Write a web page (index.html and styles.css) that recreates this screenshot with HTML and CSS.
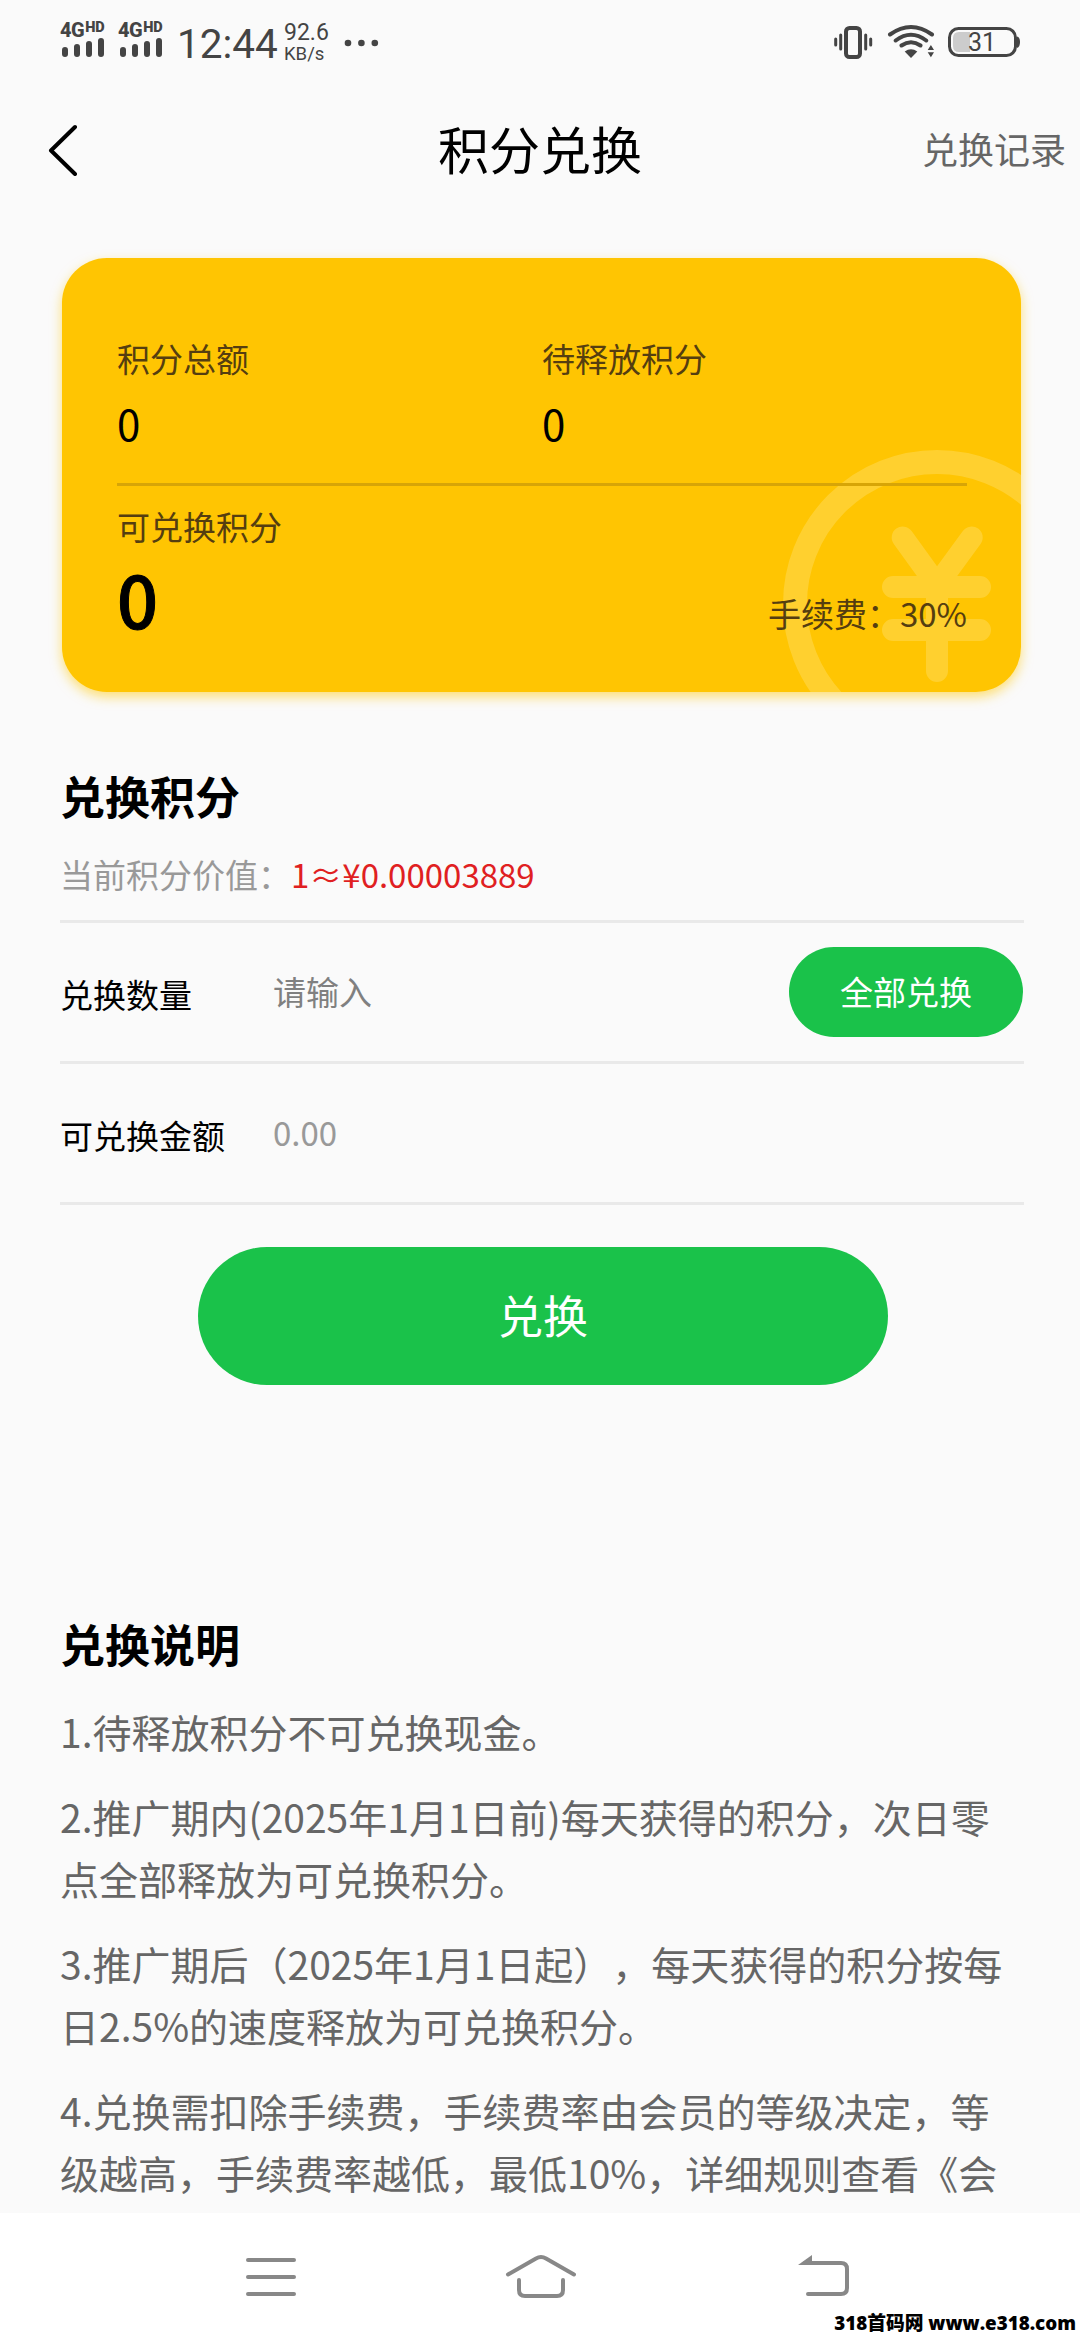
FILE: index.html
```html
<!DOCTYPE html>
<html lang="zh-CN">
<head>
<meta charset="utf-8">
<title>积分兑换</title>
<link rel="stylesheet" href="styles.css">
</head>
<body>
<div class="screen">
  <header class="status">
    <div class="status-left">
      <div class="signal">
        <div class="net">4G<span class="hd">HD</span></div>
        <svg class="bars" width="44" height="20" viewBox="0 0 44 20"><path d="M3 12v4M15 9v7M27 6v10M39 3v13"/></svg>
      </div>
      <div class="signal">
        <div class="net">4G<span class="hd">HD</span></div>
        <svg class="bars" width="44" height="20" viewBox="0 0 44 20"><path d="M3 12v4M15 9v7M27 6v10M39 3v13"/></svg>
      </div>
      <div class="time">12:44</div>
      <div class="speed"><span class="rate">92.6</span><span class="unit">KB/s</span></div>
      <svg class="more" width="36" height="8" viewBox="0 0 36 8"><circle cx="4" cy="4" r="3.3"/><circle cx="17.4" cy="4" r="3.3"/><circle cx="30.8" cy="4" r="3.3"/></svg>
    </div>
    <svg class="status-right" width="190" height="44" viewBox="0 0 190 44" fill="none" stroke="#444">
      <rect x="15" y="10" width="14" height="29" rx="3.500" stroke-width="4"/>
      <path d="M4.700 21v6M9.700 17v14M34.700 17v14M39.700 21v6" stroke-width="3" stroke-linecap="round"/>
      <path d="M59 16.500Q80 1.500 101 16.500M64.700 22.500Q80 11 95.200 22.500M70.500 27.500Q80 21 89.500 27.500" stroke-width="4" stroke-linecap="round"/>
      <path d="M73.700 33.500Q80 29 86.300 33.500L80 40Z" fill="#444" stroke="none"/>
      <path d="M96.700 32L99.900 27L103 32ZM96.700 34.300L99.900 39.300L103 34.300Z" fill="#444" stroke="none"/>
      <rect x="118.500" y="10.500" width="66" height="27" rx="9" stroke-width="3"/>
      <path d="M139 14V34H128Q122 34 122 28V20Q122 14 128 14Z" fill="#ccc" stroke="none"/>
      <path d="M186 18.500Q189 19 189 24Q189 29 186 30Z" fill="#444" stroke="none"/>
      <text class="battery-text" x="151" y="33" text-anchor="middle">31</text>
    </svg>
  </header>

  <nav class="titlebar">
    <svg class="back" width="30" height="52" viewBox="0 0 30 52"><path d="M27 3L3 26.500L27 50"/></svg>
    <h1 class="title">积分兑换</h1>
    <a class="records">兑换记录</a>
  </nav>

  <main class="content">
    <section class="card">
      <svg class="coin" width="240" height="244" viewBox="0 0 240 244" fill="none" stroke="#ffd02f">
        <circle cx="156" cy="156" r="142" stroke-width="24"/>
        <path d="M121.700 89.500L156 137L190.700 89.500" stroke-width="22" stroke-linecap="round" stroke-linejoin="round"/>
        <path d="M112 139H199M112 182H199M156 139V223" stroke-width="22" stroke-linecap="round"/>
      </svg>
      <div class="totals">
        <div class="cell"><div class="label">积分总额</div><div class="num">0</div></div>
        <div class="cell"><div class="label">待释放积分</div><div class="num">0</div></div>
      </div>
      <div class="label">可兑换积分</div>
      <div class="available"><span class="big">0</span><span class="fee">手续费：30%</span></div>
    </section>

    <section class="form">
      <h2 class="heading">兑换积分</h2>
      <p class="value">当前积分价值：<span class="red">1≈¥0.00003889</span></p>
      <div class="row">
        <span class="name">兑换数量</span><span class="hint dark">请输入</span>
        <button class="all">全部兑换</button>
      </div>
      <div class="row"><span class="name">可兑换金额</span><span class="hint">0.00</span></div>
      <button class="submit">兑换</button>
    </section>

    <section class="notes">
      <h2 class="heading">兑换说明</h2>
      <p>1.待释放积分不可兑换现金。</p>
      <p>2.推广期内(2025年1月1日前)每天获得的积分，次日零<br>点全部释放为可兑换积分。</p>
      <p>3.推广期后（2025年1月1日起），每天获得的积分按每<br>日2.5%的速度释放为可兑换积分。</p>
      <p>4.兑换需扣除手续费，手续费率由会员的等级决定，等<br>级越高，手续费率越低，最低10%，详细规则查看《会</p>
    </section>
  </main>

  <footer class="navbar">
    <svg class="nav-icon" width="54" height="46" viewBox="0 0 54 46"><path d="M4 6H50M4 23H50M4 40H50"/></svg>
    <svg class="nav-icon home" width="74" height="46" viewBox="0 0 74 46"><path d="M4 20.500L32 4.500Q37 1.500 42 4.500L70 20.500M15 26V36Q15 42 21 42H53Q59 42 59 36V26"/></svg>
    <svg class="nav-icon" width="54" height="46" viewBox="0 0 54 46"><path d="M8 9H44Q50 9 50 15V34Q50 40 44 40H11"/><path class="tip" d="M1 11L15 1V11Z"/></svg>
    <div class="watermark">318首码网 www.e318.com</div>
  </footer>
</div>
</body>
</html>
```

FILE: styles.css
```css
* { box-sizing: border-box; }
body {
  margin: 0;
  background: #fafafa;
  color: #000;
  font-family: "Noto Sans CJK SC", "Noto Sans", sans-serif;
  text-spacing-trim: space-all;
}
h1, h2, p { margin: 0; }
svg { display: block; flex: none; }
button {
  border: 0;
  padding: 0;
  background: #1ac24a;
  color: #fff;
  font-family: inherit;
}
.screen {
  width: 1080px;
  height: 2340px;
  display: flex;
  flex-direction: column;
  overflow: hidden;
}

/* system status bar */
.status {
  height: 84px;
  padding: 18px 59px 0 60px;
  display: flex;
  justify-content: space-between;
  color: #444;
  font-family: Roboto, sans-serif;
}
.status-left { display: flex; }
.signal { width: 58px; }
.net {
  height: 20px;
  padding-top: 2px;
  display: flex;
  font-size: 20px;
  line-height: 20px;
  font-weight: 800;
  letter-spacing: -0.5px;
}
.hd { font-size: 14.5px; line-height: 16px; margin-left: 1px; letter-spacing: 0; font-weight: 900; }
.bars { fill: none; stroke: #444; stroke-width: 6; stroke-linecap: round; margin-left: 2px; }
.time { width: 108px; padding: 3px 0 0 1px; font-size: 40.500px; line-height: 47px; }
.speed { width: 60px; padding-top: 4px; display: flex; flex-direction: column; }
.rate { font-size: 23px; line-height: 22px; }
.unit { font-size: 18.500px; line-height: 20px; }
.more { fill: #444; margin-top: 21px; }
.battery-text { fill: #444; stroke: none; font-size: 25px; }

/* page title bar */
.titlebar {
  height: 132px;
  padding: 0 14px 0 48px;
  display: grid;
  grid-template-columns: 390px auto 1fr;
  align-items: center;
}
.back { fill: none; stroke: #000; stroke-width: 4; stroke-linecap: round; stroke-linejoin: round; }
.title { font-size: 51px; font-weight: 400; line-height: 76px; padding-bottom: 5px; }
.records { justify-self: end; font-size: 36px; line-height: 54px; color: #666; padding-bottom: 5px; }

.content { flex: 1; min-height: 0; overflow: hidden; padding: 42px 56px 0 60px; }

/* points card */
.card {
  position: relative;
  width: 959px;
  height: 434px;
  margin-left: 2px;
  padding: 75px 54px 0 55px;
  border-radius: 45px;
  background: #ffc502;
  box-shadow: 0 5px 12px rgba(255, 205, 30, 0.6);
}
.coin { position: absolute; right: 0; bottom: 0; border-bottom-right-radius: 45px; }
.card > :not(.coin) { position: relative; }
.totals { display: flex; height: 153px; border-bottom: 3px solid #d7a507; margin-bottom: 15px; }
.cell { width: 425px; }
.label { font-size: 33px; line-height: 50px; color: #553e10; }
.num { font-size: 42px; line-height: 64px; margin-top: 8px; }
.available { display: flex; justify-content: space-between; align-items: flex-end; height: 97px; }
.big { font-size: 72px; line-height: 100px; font-weight: 500; -webkit-text-stroke: 1px #000; }
.fee { font-size: 33px; line-height: 50px; color: #553e10; padding-bottom: 10px; }

/* exchange form */
.form { padding-top: 71px; }
.heading { font-size: 45px; line-height: 66px; font-weight: 700; }
.value { font-size: 33px; line-height: 50px; color: #999; padding: 20px 0; height: 94px; border-bottom: 3px solid #e9e9e9; }
.red { color: #e01f22; }
.row {
  height: 141px;
  padding-right: 1px;
  border-bottom: 3px solid #e9e9e9;
  display: flex;
  align-items: center;
  font-size: 33px;
}
.name { width: 213px; padding-top: 3px; }
.hint { color: #999; padding-bottom: 2px; }
.hint.dark { color: #808080; }
.all { margin-left: auto; width: 234px; height: 90px; border-radius: 45px; font-size: 33px; padding-bottom: 2px; }
.submit { display: block; width: 690px; height: 138px; margin: 42px 0 0 138px; padding-bottom: 3px; border-radius: 69px; font-size: 45px; }

/* rules */
.notes { padding-top: 226px; font-size: 39px; line-height: 62.5px; color: #666; }
.notes .heading { color: #000; margin-bottom: 23px; }
.notes p { margin-bottom: 22px; white-space: nowrap; }

/* system navigation bar */
.navbar {
  position: relative;
  flex: none;
  height: 127px;
  padding: 41px 229px 0 244px;
  background: #fff;
  display: flex;
  justify-content: space-between;
}
.home { margin-right: 13px; }
.nav-icon { fill: none; stroke: #888; stroke-width: 4; stroke-linecap: round; stroke-linejoin: round; }
.tip { fill: #888; stroke: none; }
.watermark {
  position: absolute;
  right: 4px;
  bottom: 4px;
  font: 800 18.800px/26px "Open Sans", "Noto Sans CJK SC", sans-serif;
  white-space: nowrap;
}
```
